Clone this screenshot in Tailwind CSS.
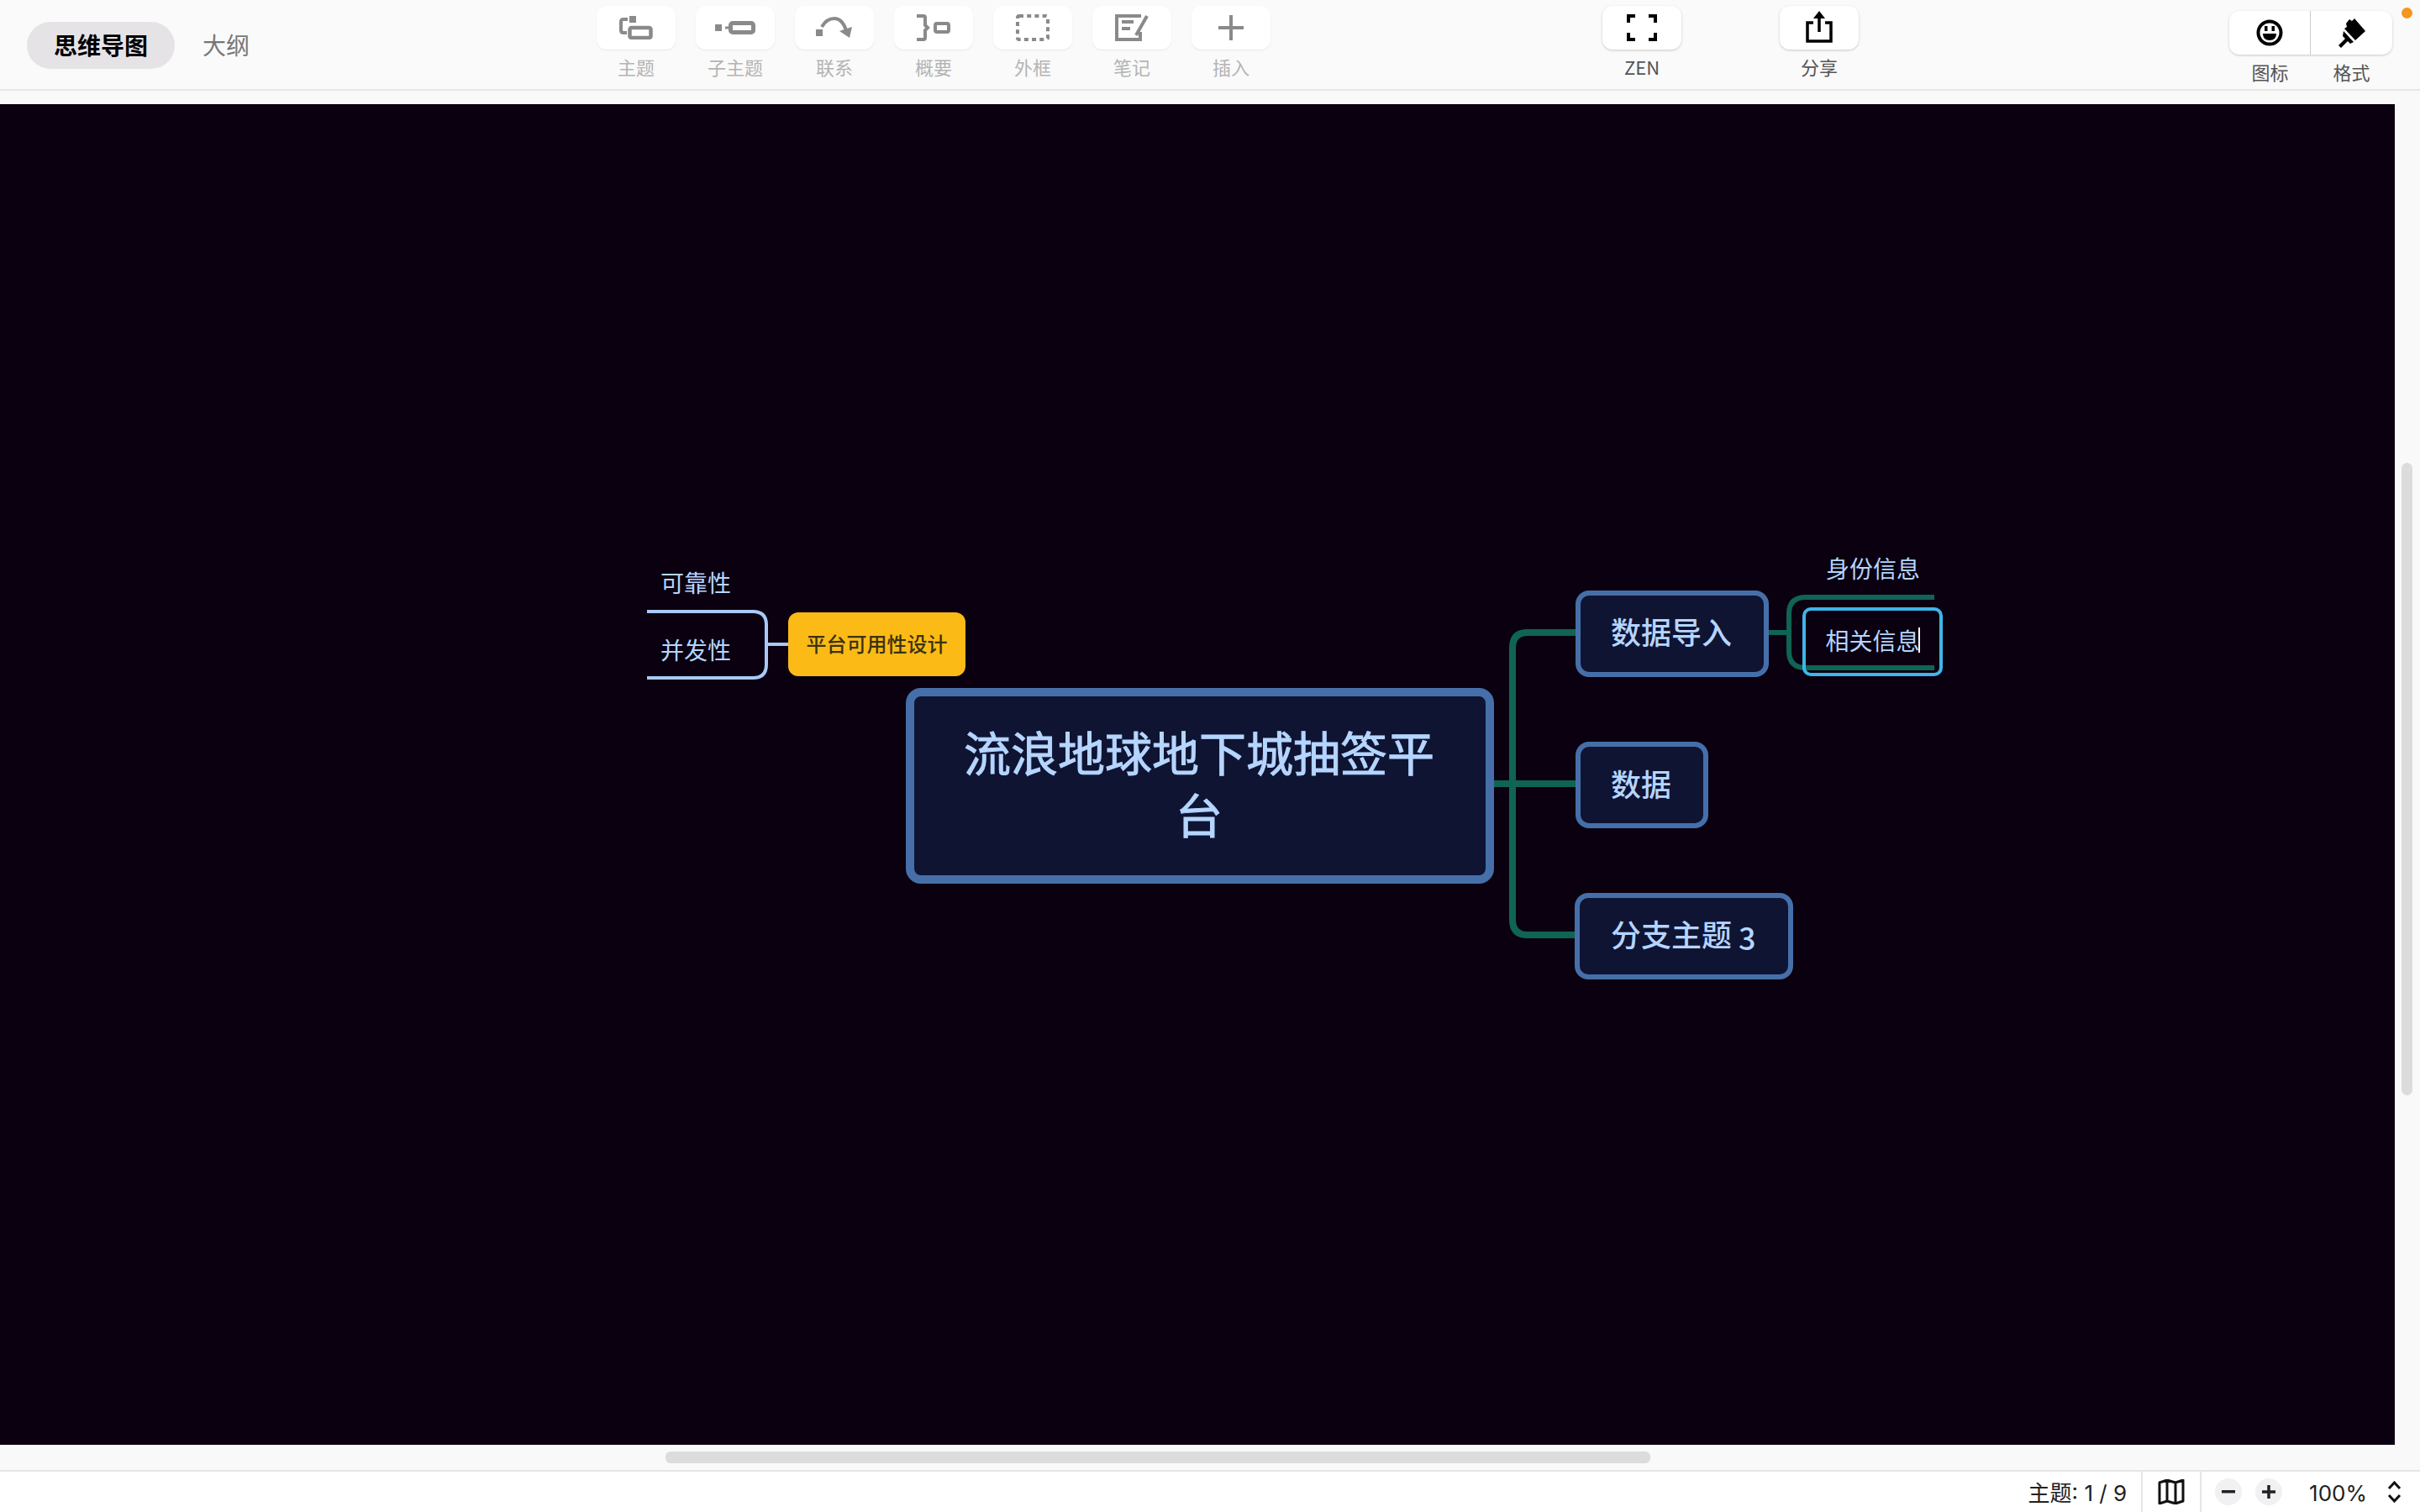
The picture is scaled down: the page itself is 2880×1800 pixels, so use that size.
<!DOCTYPE html>
<html lang="zh-CN">
<head>
  <meta charset="UTF-8" />
  <title>思维导图</title>
  <script src="https://cdn.jsdelivr.net/npm/@tailwindcss/browser@4"></script>
</head>
<body class="w-[2880px] h-[1800px] overflow-hidden bg-[#f9f9fa] font-['Noto_Sans_CJK_SC','Noto_Sans',sans-serif]">
<div class="flex flex-col h-[1800px]">

  <!-- toolbar -->
  <header class="relative flex h-[108px] shrink-0 items-start border-b-2 border-[#e6e6e6] bg-[#fafafa]">
    <div class="flex w-[710px] shrink-0 items-center pl-8 pt-[26px]">
      <span class="flex h-14 w-[176px] items-center justify-center rounded-full bg-[#e5e3e6] pb-[2px] text-[28px] font-bold text-black">思维导图</span>
      <span class="ml-[33px] pb-[2px] text-[28px] text-[#777]">大纲</span>
    </div>

    <div class="flex gap-[24px] pt-[7px]">
      <div class="flex w-[94px] flex-col items-center">
        <div class="flex h-[52px] w-[94px] items-center justify-center rounded-xl bg-white shadow-[0_1px_2px_rgba(0,0,0,0.08)]">
          <svg width="40" height="28" viewBox="0 0 40 28" fill="none" class="text-[#8a8a8a]"><rect x="12" y="0" width="8" height="8" fill="currentColor"/><path d="M10 4H5Q2 4 2 7v10q0 3 3 3h4" stroke="currentColor" stroke-width="4"/><rect x="12.5" y="14" width="25" height="12" rx="2" stroke="currentColor" stroke-width="4.5"/></svg>
        </div>
        <span class="mt-[6px] text-[22px] leading-7 text-[#b4b4b4]">主题</span>
      </div>
      <div class="flex w-[94px] flex-col items-center">
        <div class="flex h-[52px] w-[94px] items-center justify-center rounded-xl bg-white shadow-[0_1px_2px_rgba(0,0,0,0.08)]">
          <svg width="48" height="16" viewBox="0 0 48 16" fill="none" class="text-[#8a8a8a]"><rect x="0" y="4" width="8" height="8" fill="currentColor"/><path d="M12 8h5" stroke="currentColor" stroke-width="3"/><rect x="18.5" y="2.5" width="27" height="11" rx="2.5" stroke="currentColor" stroke-width="5"/></svg>
        </div>
        <span class="mt-[6px] text-[22px] leading-7 text-[#b4b4b4]">子主题</span>
      </div>
      <div class="flex w-[94px] flex-col items-center">
        <div class="flex h-[52px] w-[94px] items-center justify-center rounded-xl bg-white shadow-[0_1px_2px_rgba(0,0,0,0.08)]">
          <svg width="44" height="26" viewBox="0 0 44 26" fill="none" class="text-[#8a8a8a]"><rect x="0" y="15" width="8" height="8" fill="currentColor"/><path d="M7 12C11 5 16 2 22 2c6 0 11 5 14 14" stroke="currentColor" stroke-width="4"/><path d="M28 17l15-5-3 13z" fill="currentColor"/></svg>
        </div>
        <span class="mt-[6px] text-[22px] leading-7 text-[#b4b4b4]">联系</span>
      </div>
      <div class="flex w-[94px] flex-col items-center">
        <div class="flex h-[52px] w-[94px] items-center justify-center rounded-xl bg-white shadow-[0_1px_2px_rgba(0,0,0,0.08)]">
          <svg width="40" height="32" viewBox="0 0 40 32" fill="none" class="text-[#8a8a8a]"><path d="M0 2h8q2 0 2 2v9l3 3-3 3v9q0 2-2 2H0" stroke="currentColor" stroke-width="4"/><rect x="22" y="11" width="16" height="10" rx="2" stroke="currentColor" stroke-width="4"/></svg>
        </div>
        <span class="mt-[6px] text-[22px] leading-7 text-[#b4b4b4]">概要</span>
      </div>
      <div class="flex w-[94px] flex-col items-center">
        <div class="flex h-[52px] w-[94px] items-center justify-center rounded-xl bg-white shadow-[0_1px_2px_rgba(0,0,0,0.08)]">
          <svg width="40" height="32" viewBox="0 0 40 32" fill="none" class="text-[#8a8a8a]"><rect x="2" y="2" width="36" height="28" rx="2" stroke="currentColor" stroke-width="4" stroke-dasharray="5 4.2"/></svg>
        </div>
        <span class="mt-[6px] text-[22px] leading-7 text-[#b4b4b4]">外框</span>
      </div>
      <div class="flex w-[94px] flex-col items-center">
        <div class="flex h-[52px] w-[94px] items-center justify-center rounded-xl bg-white shadow-[0_1px_2px_rgba(0,0,0,0.08)]">
          <svg width="40" height="32" viewBox="0 0 40 32" fill="none" class="text-[#8a8a8a]"><path d="M31 2H2v28h28v-9" stroke="currentColor" stroke-width="4"/><path d="M8 9h14M8 17h10" stroke="currentColor" stroke-width="4"/><path d="M38 2L25 25" stroke="currentColor" stroke-width="4"/></svg>
        </div>
        <span class="mt-[6px] text-[22px] leading-7 text-[#b4b4b4]">笔记</span>
      </div>
      <div class="flex w-[94px] flex-col items-center">
        <div class="flex h-[52px] w-[94px] items-center justify-center rounded-xl bg-white shadow-[0_1px_2px_rgba(0,0,0,0.08)]">
          <svg width="30" height="30" viewBox="0 0 30 30" fill="none" class="text-[#8a8a8a]"><path d="M15 0v30M0 15h30" stroke="currentColor" stroke-width="4"/></svg>
        </div>
        <span class="mt-[6px] text-[22px] leading-7 text-[#b4b4b4]">插入</span>
      </div>
    </div>

    <div class="ml-[395px] flex flex-col items-center pt-[7px]">
      <div class="flex h-[52px] w-[94px] items-center justify-center rounded-xl bg-white shadow-[0_1px_3px_rgba(0,0,0,0.2)]">
        <svg width="36" height="32" viewBox="0 0 36 32" fill="none" class="text-black"><path d="M10 2H2v8M26 2h8v8M2 22v8h8M34 22v8h-8" stroke="currentColor" stroke-width="4"/></svg>
      </div>
      <span class="mt-[6px] text-[22px] leading-7 text-[#555]">ZEN</span>
    </div>

    <div class="ml-[117px] flex flex-col items-center pt-[7px]">
      <div class="flex h-[52px] w-[94px] items-center justify-center rounded-xl bg-white pb-[3px] shadow-[0_1px_3px_rgba(0,0,0,0.2)]">
        <svg width="32" height="38" viewBox="0 0 32 38" fill="none" class="text-black"><path d="M9 14H2v22h28V14h-7" stroke="currentColor" stroke-width="3.5"/><path d="M16 25V4" stroke="currentColor" stroke-width="3.5"/><path d="M16 0l7 9H9z" fill="currentColor"/></svg>
      </div>
      <span class="mt-[6px] text-[22px] leading-7 text-[#555]">分享</span>
    </div>

    <div class="ml-[441px] flex flex-col pt-[13px]">
      <div class="flex h-[52px] w-[194px] items-center divide-x divide-[#ccc] rounded-xl bg-white shadow-[0_1px_3px_rgba(0,0,0,0.2)]">
        <div class="flex h-full w-[97px] items-center justify-center">
          <svg width="32" height="34" viewBox="0 0 32 34" fill="none"><circle cx="16" cy="17" r="13.5" stroke="black" stroke-width="4"/><rect x="10" y="9" width="3.5" height="6" fill="black"/><rect x="18.5" y="9" width="3.5" height="6" fill="black"/><path d="M8 18h16c0 5-3 8-8 8s-8-3-8-8z" fill="black"/></svg>
        </div>
        <div class="flex h-full w-[97px] items-center justify-center">
          <svg width="34" height="38" viewBox="0 0 34 38" fill="black"><path d="M14 3l3 2 3-3 13 15-12 11L8 14l3-2-1-4z"/><path d="M7 17l12 13-4 2-3-3-8 8-3-3 8-8-3-3z"/></svg>
        </div>
      </div>
      <div class="mt-[6px] flex">
        <span class="w-[97px] text-center text-[22px] leading-7 text-[#555]">图标</span>
        <span class="w-[97px] text-center text-[22px] leading-7 text-[#555]">格式</span>
      </div>
    </div>

    <span class="absolute left-[2858px] top-[9px] size-[13px] rounded-full bg-[#f5951f]"></span>
  </header>

  <!-- canvas area -->
  <div class="flex h-[1642px] shrink-0 flex-col pt-[16px]">
    <div class="flex h-[1596px] shrink-0">
      <main class="relative h-full w-[2850px] shrink-0 overflow-hidden bg-[#0a0010]">
        <!-- offsets inside main: page y minus 124 -->
        <svg class="absolute left-0 top-0" width="2850" height="1596" viewBox="0 124 2850 1596" fill="none">
          <g stroke="#0f6456">
            <path d="M1778 933H1875" stroke-width="8"/>
            <path d="M1875 753H1818Q1800 753 1800 771V1095Q1800 1113 1818 1113H1875" stroke-width="8"/>
            <path d="M2105 753H2129" stroke-width="6"/>
            <path d="M2302 711H2149Q2129 711 2129 731V775Q2129 795 2149 795H2302" stroke-width="6"/>
          </g>
          <g stroke="#a9c8f5" stroke-width="4">
            <path d="M938 767H912"/>
            <path d="M770 728H896Q912 728 912 744V791Q912 807 896 807H770"/>
          </g>
        </svg>

        <div class="absolute left-[1078px] top-[695px] flex h-[233px] w-[700px] items-center justify-center rounded-[18px] border-[10px] border-[#466fa9] bg-[#0f1433] pl-[50px] pr-[52px] pb-[10px] text-center text-[56px] leading-[74px] text-[#b5d5ff] [-webkit-text-stroke:1px_#b5d5ff]">流浪地球地下城抽签平台</div>

        <div class="absolute left-[1875px] top-[579px] flex h-[103px] w-[230px] items-center justify-center rounded-[16px] border-[6px] border-[#466fa9] bg-[#0f1433] pr-[2px] pb-[8px] text-[36px] font-medium text-[#b5d5ff]">数据导入</div>
        <div class="absolute left-[1875px] top-[759px] flex h-[103px] w-[158px] items-center justify-center rounded-[16px] border-[6px] border-[#466fa9] bg-[#0f1433] pr-[2px] pb-[6px] text-[36px] font-medium text-[#b5d5ff]">数据</div>
        <div class="absolute left-[1874px] top-[939px] block h-[103px] w-[260px] rounded-[16px] border-[6px] border-[#466fa9] bg-[#0f1433] pl-[37px] pt-[15px] text-[36px] leading-[54px] font-medium whitespace-nowrap text-[#b5d5ff]">分支主题&nbsp;<span class="align-[-4px]">3</span></div>

        <span class="absolute left-[2173px] top-[532px] text-[28px] leading-10 text-[#b5d5ff]">身份信息</span>
        <div class="absolute left-[2145px] top-[599px] flex h-[82px] w-[167px] items-center justify-center rounded-[10px] border-4 border-[#3fb5ea] pb-[5px] text-[28px] text-[#b5d5ff]">相关信息<span class="-ml-[2px] h-[30px] w-0.5 bg-white"></span></div>

        <div class="absolute left-[938px] top-[605px] flex h-[76px] w-[211px] items-center justify-center rounded-[12px] bg-[#fbba16] pb-[2px] text-[24px] font-medium text-[#3a3210]">平台可用性设计</div>
        <span class="absolute left-[786px] top-[549px] text-[28px] leading-10 text-[#b5d5ff]">可靠性</span>
        <span class="absolute left-[786px] top-[629px] text-[28px] leading-10 text-[#b5d5ff]">并发性</span>
      </main>
      <div class="relative flex-1">
        <div class="absolute left-[8px] top-[427px] h-[753px] w-[13px] rounded-full bg-[#dcdcdc]"></div>
      </div>
    </div>
    <div class="relative h-[30px] shrink-0">
      <div class="absolute left-[792px] top-[8px] h-[14px] w-[1172px] rounded-md bg-[#dcdcdc]"></div>
    </div>
  </div>

  <!-- status bar -->
  <footer class="flex h-[50px] shrink-0 items-center justify-end border-t-2 border-[#e6e6e6] bg-white font-['Inter','Noto_Sans_CJK_SC',sans-serif] text-[26px] text-[#222]">
    <span class="pt-[2px]">主题: 1 / 9</span>
    <div class="ml-[17px] flex h-full w-[72px] items-center justify-center border-x-2 border-[#e6e6e6]">
      <svg width="32" height="30" viewBox="0 0 32 30" fill="none"><path d="M2 4l9-3 10 3 9-3v25l-9 3-10-3-9 3z M11 1v25 M21 4v25" stroke="#111" stroke-width="3" stroke-linejoin="round"/></svg>
    </div>
    <span class="ml-4 flex size-8 items-center justify-center rounded-full bg-[#f1f0f2]"><svg width="16" height="4" viewBox="0 0 16 4"><rect width="16" height="3.5" fill="#222"/></svg></span>
    <span class="ml-4 flex size-8 items-center justify-center rounded-full bg-[#f1f0f2]"><svg width="16" height="16" viewBox="0 0 16 16"><path d="M8 0v16M0 8h16" stroke="#222" stroke-width="3.5"/></svg></span>
    <span class="ml-8 pt-[2px]">100%</span>
    <svg class="ml-6 mr-[22px]" width="17" height="26" viewBox="0 0 17 26" fill="none"><path d="M2 9l6.5-7L15 9M2 17l6.5 7 6.5-7" stroke="#111" stroke-width="3"/></svg>
  </footer>
</div>
</body>
</html>
